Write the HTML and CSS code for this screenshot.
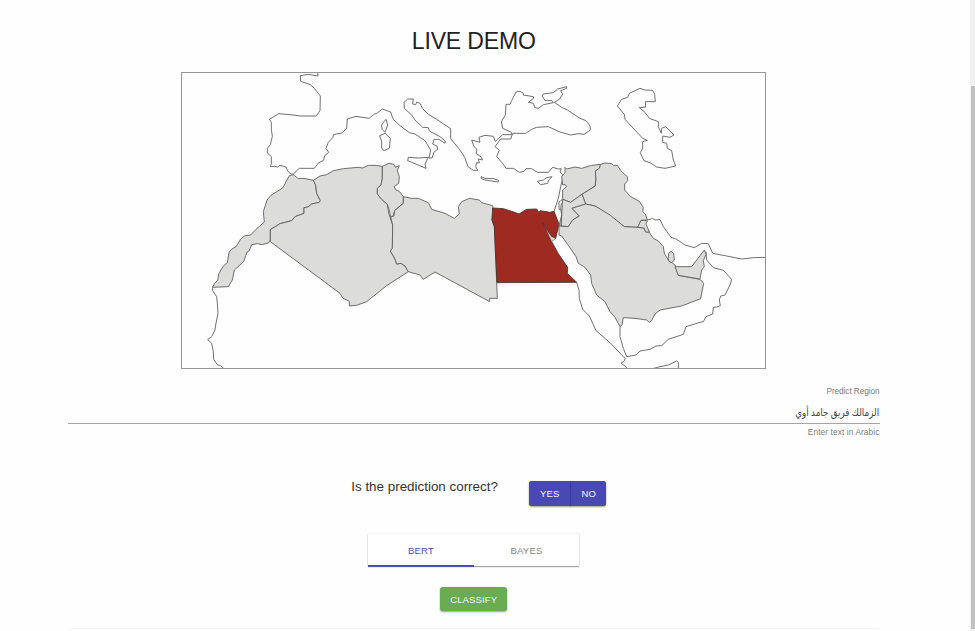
FILE: index.html
```html
<!DOCTYPE html>
<html lang="en">
<head>
<meta charset="utf-8">
<title>Live Demo</title>
<link rel="stylesheet" href="styles.css">
</head>
<body>
<div class="page">
<main class="content">
  <h1 class="title">LIVE DEMO</h1>
  <svg class="map" viewBox="3 6 1758 891">
    <!-- coastlines -->
    <path class="coast" d="M413 8L414 18 385 13 361 17 362 34 391 44 403 55 421 78 420 122 409 138 362 138 340 135 296 131 268 148 274 157 274 178 277 199 271 224 262 235 262 249 274 260 274 281 271 290 283 289 293 291 300 286 318 291 323 303 333 312 340 312 358 295 403 295 416 278 431 271 434 257 446 247 438 235 445 217 459 202 460 194 485 189 500 176 502 147 528 139 567 145 583 132 590 130 607 117 632 126 637 141 642 150 660 167 688 188 705 192 735 212 752 240 747 264 756 264 762 246 773 238 771 228 758 222 762 208 777 208 795 220 796 213 780 200 748 183 745 173 728 172 705 150 694 134 673 115 672 97 683 87 700 87 698 102 707 104 710 96 720 100 728 116 745 133 770 148 812 176 812 206 840 240 854 262 864 290 880 301 893 301 887 290 890 278 898 279 895 267 907 270 905 262 888 250 891 238 882 230 875 210 900 217 897 202 915 196 940 199 946 214 968 194 994 194 994 187 968 175 964 155 976 135 978 103 990 103 995 92 1008 66 1020 64 1030 70 1030 75 1060 80 1061 85 1045 97 1060 100 1065 113 1075 115 1090 104 1120 98 1116 92 1095 92 1087 78 1090 72 1120 68 1133 57 1160 50 1160 55 1142 62 1148 72 1138 88 1123 97 1145 112 1162 120 1200 145 1218 152 1230 168 1231 180 1212 193 1195 191 1172 195 1140 186 1105 170 1070 172 1055 178 1037 190 998 190 992 207 962 207 945 230 958 240 950 260 968 280 978 295 1000 295 1018 307 1032 304 1038 296 1055 296 1072 307 1105 307 1118 292 1135 297 1144 296 1140 306 1147 313 1148 324 1142 350 1135 385 1122 425M98 652L98 662 110 680 112 700 114 730 107 765 105 780 95 800 83 809 95 820 100 845 101 868 112 884 122 887 132 896"/>
    <g transform="translate(570)">
      <path class="coast" d="M48 148L53 165 45 187 36 178 35 165 42 155ZM45 190L61 205 58 235 42 242 35 235 35 215 29 197ZM175 262L165 282 168 295 113 272 115 262 145 264ZM333 320L345 325 370 326 386 331 384 336 345 330 334 326ZM546 320L535 332 533 340 512 344 502 334 520 330 530 323Z"/>
    </g>
    <g class="coast" transform="translate(1140)">
      <path d="M172 108L185 88 203 82 208 70 240 55 255 60 278 61 284 73 286 95 256 95 257 111 238 113 255 127 268 145 295 155 295 170 304 190 305 175 317 170 342 195 330 202 308 198 308 217 320 220 322 235 335 242 340 270 347 288 315 295 290 291 270 278 252 272 241 248 248 235 248 215 262 211 248 205 195 148 193 133Z"/>
      <path d="M262 450L270 448 278 445 285 450 300 449 310 470 333 502 350 508 375 525 403 533 425 520 445 521 458 550 500 558 545 567 580 563 617 562"/>
      <path d="M438 545L440 570 460 593 490 601 515 628 510 645 495 675 482 678 478 690 481 707 470 711 460 712 458 732 438 740 430 755 420 757 378 770 370 793 325 808 305 827 288 828 270 838 240 843 228 855 200 860 190 835 180 800 180 770"/>
      <path d="M50 637L57 660 58 685 68 718 88 738 108 782 150 818 190 860 195 865 194 872 183 880 198 890 202 896M278 896L300 890 325 885 350 873 355 877 355 896"/>
    </g>
    <!-- Morocco, Algeria -->
    <path class="country" d="M340 314L355 326 372 325 400 331 407 345 410 370 421 392 418 397 395 402 384 411 372 413 372 430 345 440 335 452 300 461 271 479 271 510 267 518 247 524 232 521 215 524 208 542 201 546 191 575 163 600 157 630 145 650 98 652 103 641 113 630 117 610 130 588 142 578 147 548 154 538 168 530 182 507 195 497 212 495 227 479 253 456 250 425 261 390 273 376 308 354 328 317Z"/>
    <path class="country" d="M400 331L420 318 440 314 460 302 490 296 535 292 548 294 565 286 585 286 607 289 607 325 603 345 592 355 592 372 605 388 622 403 626 430 638 465 637 535 631 543 644 565 650 582 663 580 675 588 685 605 620 647 560 695 530 706 508 708 508 694 488 684 480 670 271 515 271 479 300 461 335 452 345 440 372 430 372 413 384 411 395 402 418 397 421 392 410 370 407 345Z"/>
    <!-- Tunisia, Libya, Egypt -->
    <g transform="translate(570)">
      <path class="country" d="M37 289L57 280 72 283 76 292 88 287 82 302 88 320 86 340 72 350 78 360 88 364 100 380 100 400 75 420 70 435 63 445 56 415 52 403 35 388 22 372 22 355 33 345 37 325Z"/>
      <path class="country" d="M100 380L125 385 145 385 175 398 185 418 225 430 253 445 268 432 265 410 275 395 298 385 328 390 335 398 368 407 370 420 366 450 373 470 382 685 359 685 359 695 195 606 160 628 150 615 115 605 105 588 93 580 80 582 74 565 61 543 67 535 68 465 62 441 72 438 74 422 100 400Z"/>
      <path class="country selected" d="M368 414L400 416 425 424 447 432 470 418 500 417 507 428 510 422 540 427 552 424 567 463 557 505 545 500 530 480 518 457 545 515 565 551 593 592 592 610 620 637 381 638 373 470 366 450Z"/>
      <path class="gulf" d="M518 457L530 480 545 500 557 505 549 512 545 515Z"/>
    </g>
    <!-- Middle East -->
    <g transform="translate(1140)">
      <path class="country" d="M15 292L20 297 45 291 65 295 95 286 122 283 118 295 106 303 108 325 105 348 66 373 32 397 8 388 8 360 20 350 15 343 8 345 5 320 15 308Z"/>
      <path class="country" d="M122 283L135 279 155 281 160 286 172 286 185 305 202 320 203 332 194 342 194 360 212 380 238 394 250 412 248 425 256 432 262 450 243 451 233 472 193 470 150 437 105 408 77 402 66 373 106 348 108 325 106 303 118 295Z"/>
      <path class="country" d="M8 388L32 397 66 373 77 402 36 415 58 438 38 450 25 470 3 468Z"/>
      <path class="country" d="M77 402L105 408 150 435 193 470 233 472 252 474 257 486 267 486 280 505 295 513 310 530 313 550 325 570 345 585 355 616 420 628 431 640 422 686 365 708 300 720 285 732 275 752 268 757 260 750 225 745 190 743 186 765 180 770 165 742 150 725 135 695 110 675 95 640 92 615 75 592 55 580 48 560 30 533 5 498 -3 495 -3 468 25 470 38 450 58 438 36 415Z"/>
      <path class="country" d="M243 451L262 452 258 462 268 486 257 486 252 474 233 472ZM325 565L326 550 333 544 341 550 343 570 335 578 327 574ZM345 590L395 590 433 540 438 553 430 572 433 590 425 600 420 627 355 616Z"/>
      <path class="coast" d="M8 388L2 392 -3 395 -3 418 2 418 4 400M3 468L5 435 2 418M-3 468L5 435"/>
    </g>
    <rect class="frame" x="4.5" y="7.5" width="1752" height="888"/>
  </svg>

  <div class="field">
    <label class="label">Predict Region</label>
    <div class="value" dir="rtl" lang="ar"><span class="typed">الزمالك فريق جامد أوي</span></div>
    <div class="helper">Enter text in Arabic</div>
  </div>

  <div class="feedback">
    <p class="question">Is the prediction correct?</p>
    <div class="group"><button class="yes">YES</button><button class="no">NO</button></div>
  </div>

  <div class="tabs">
    <button class="tab active">BERT</button>
    <button class="tab">BAYES</button>
  </div>

  <button class="classify">CLASSIFY</button>
  <div class="next"></div>
</main>
<div class="scroll"><div class="thumb"></div></div>
</div>
</body>
</html>
```

FILE: styles.css
```css
* { box-sizing: border-box; }
body {
  margin: 0;
  background: #fefefe;
  color: #222;
  font-family: "Liberation Sans", Arial, sans-serif;
}
button { border: 0; padding: 0; font: inherit; }
.page { display: flex; justify-content: space-between; height: 631px; overflow: hidden; }
.content {
  display: flex;
  flex-direction: column;
  align-items: center;
  width: 811.5px;
  margin-left: 68px;
}
.content > * { flex: none; }
.title { margin: 27px 0 0; font-size: 23px; font-weight: 400; line-height: 28px; letter-spacing: -0.15px; }
.map { display: block; width: 586px; height: 297px; margin-top: 17px; }
.coast, .country { stroke: #606060; stroke-width: 2.7; stroke-linejoin: round; }
.coast { fill: none; }
.country { fill: #dcdcdb; }
.country.selected { fill: #9e2a22; stroke: #4f3432; }
.gulf { fill: #d9d9d9; stroke: #4f3432; stroke-width: 1.5; }
.frame { fill: none; stroke: #969696; stroke-width: 3; }

.field { width: 100%; margin-top: 16px; text-align: right; }
.label, .helper { display: block; font-size: 8.3px; line-height: 12px; color: #7b7b7b; }
.label { height: 12px; letter-spacing: -0.1px; }
.value {
  height: 27px;
  padding-top: 7px;
  border-bottom: 1px solid #a5a5a5;
  font-family: "Liberation Sans", "DejaVu Sans", sans-serif;
  font-size: 10.5px;
  line-height: 16px;
  color: #444;
}
.typed { display: inline-block; transform: scaleX(.83); transform-origin: right; }
.helper { margin-top: 2px; letter-spacing: 0.1px; }

.feedback { display: flex; height: 25px; margin-top: 43px; padding-left: 10px; }
.question { width: 178px; margin: -2px 0 0; font-size: 13.4px; line-height: 16px; white-space: nowrap; color: #333; }
.group {
  display: flex;
  width: 77px;
  height: 25px;
  border-radius: 3px;
  overflow: hidden;
  background: #4849b3;
}
.group, .classify { box-shadow: 0 1px 2px rgba(0, 0, 0, .4); }
.group button, .classify { color: #f6f6fc; font-size: 9.5px; letter-spacing: 0.15px; }
.group button { background: #4849b3; }
.group .yes { width: 42px; border-right: 1px solid #393a9c; }
.no { width: 35px; }

.tabs {
  display: flex;
  width: 211px;
  height: 32px;
  margin-top: 28px;
  background: #fff;
  box-shadow: 0 1px 1px rgba(0, 0, 0, .32), 0 0 2px rgba(0, 0, 0, .12);
}
.tab { flex: 1; background: none; color: #858585; font-size: 9.5px; letter-spacing: 0.2px; }
.tab.active { color: #4c4dba; box-shadow: inset 0 -1px #4c4dba, 0 1px #4c4dba; }

.classify { width: 67px; height: 24px; margin-top: 21px; border-radius: 3px; background: #6aac51; }
.next { width: 100%; height: 10px; margin-top: 17px; border-top: 1px solid #f5f5f5; border-radius: 3px; }
.scroll { width: 5px; padding: 86px 0 0 1px; background: #f0f0f0; }
.thumb { height: 543px; background: #c1c1c1; }
```
